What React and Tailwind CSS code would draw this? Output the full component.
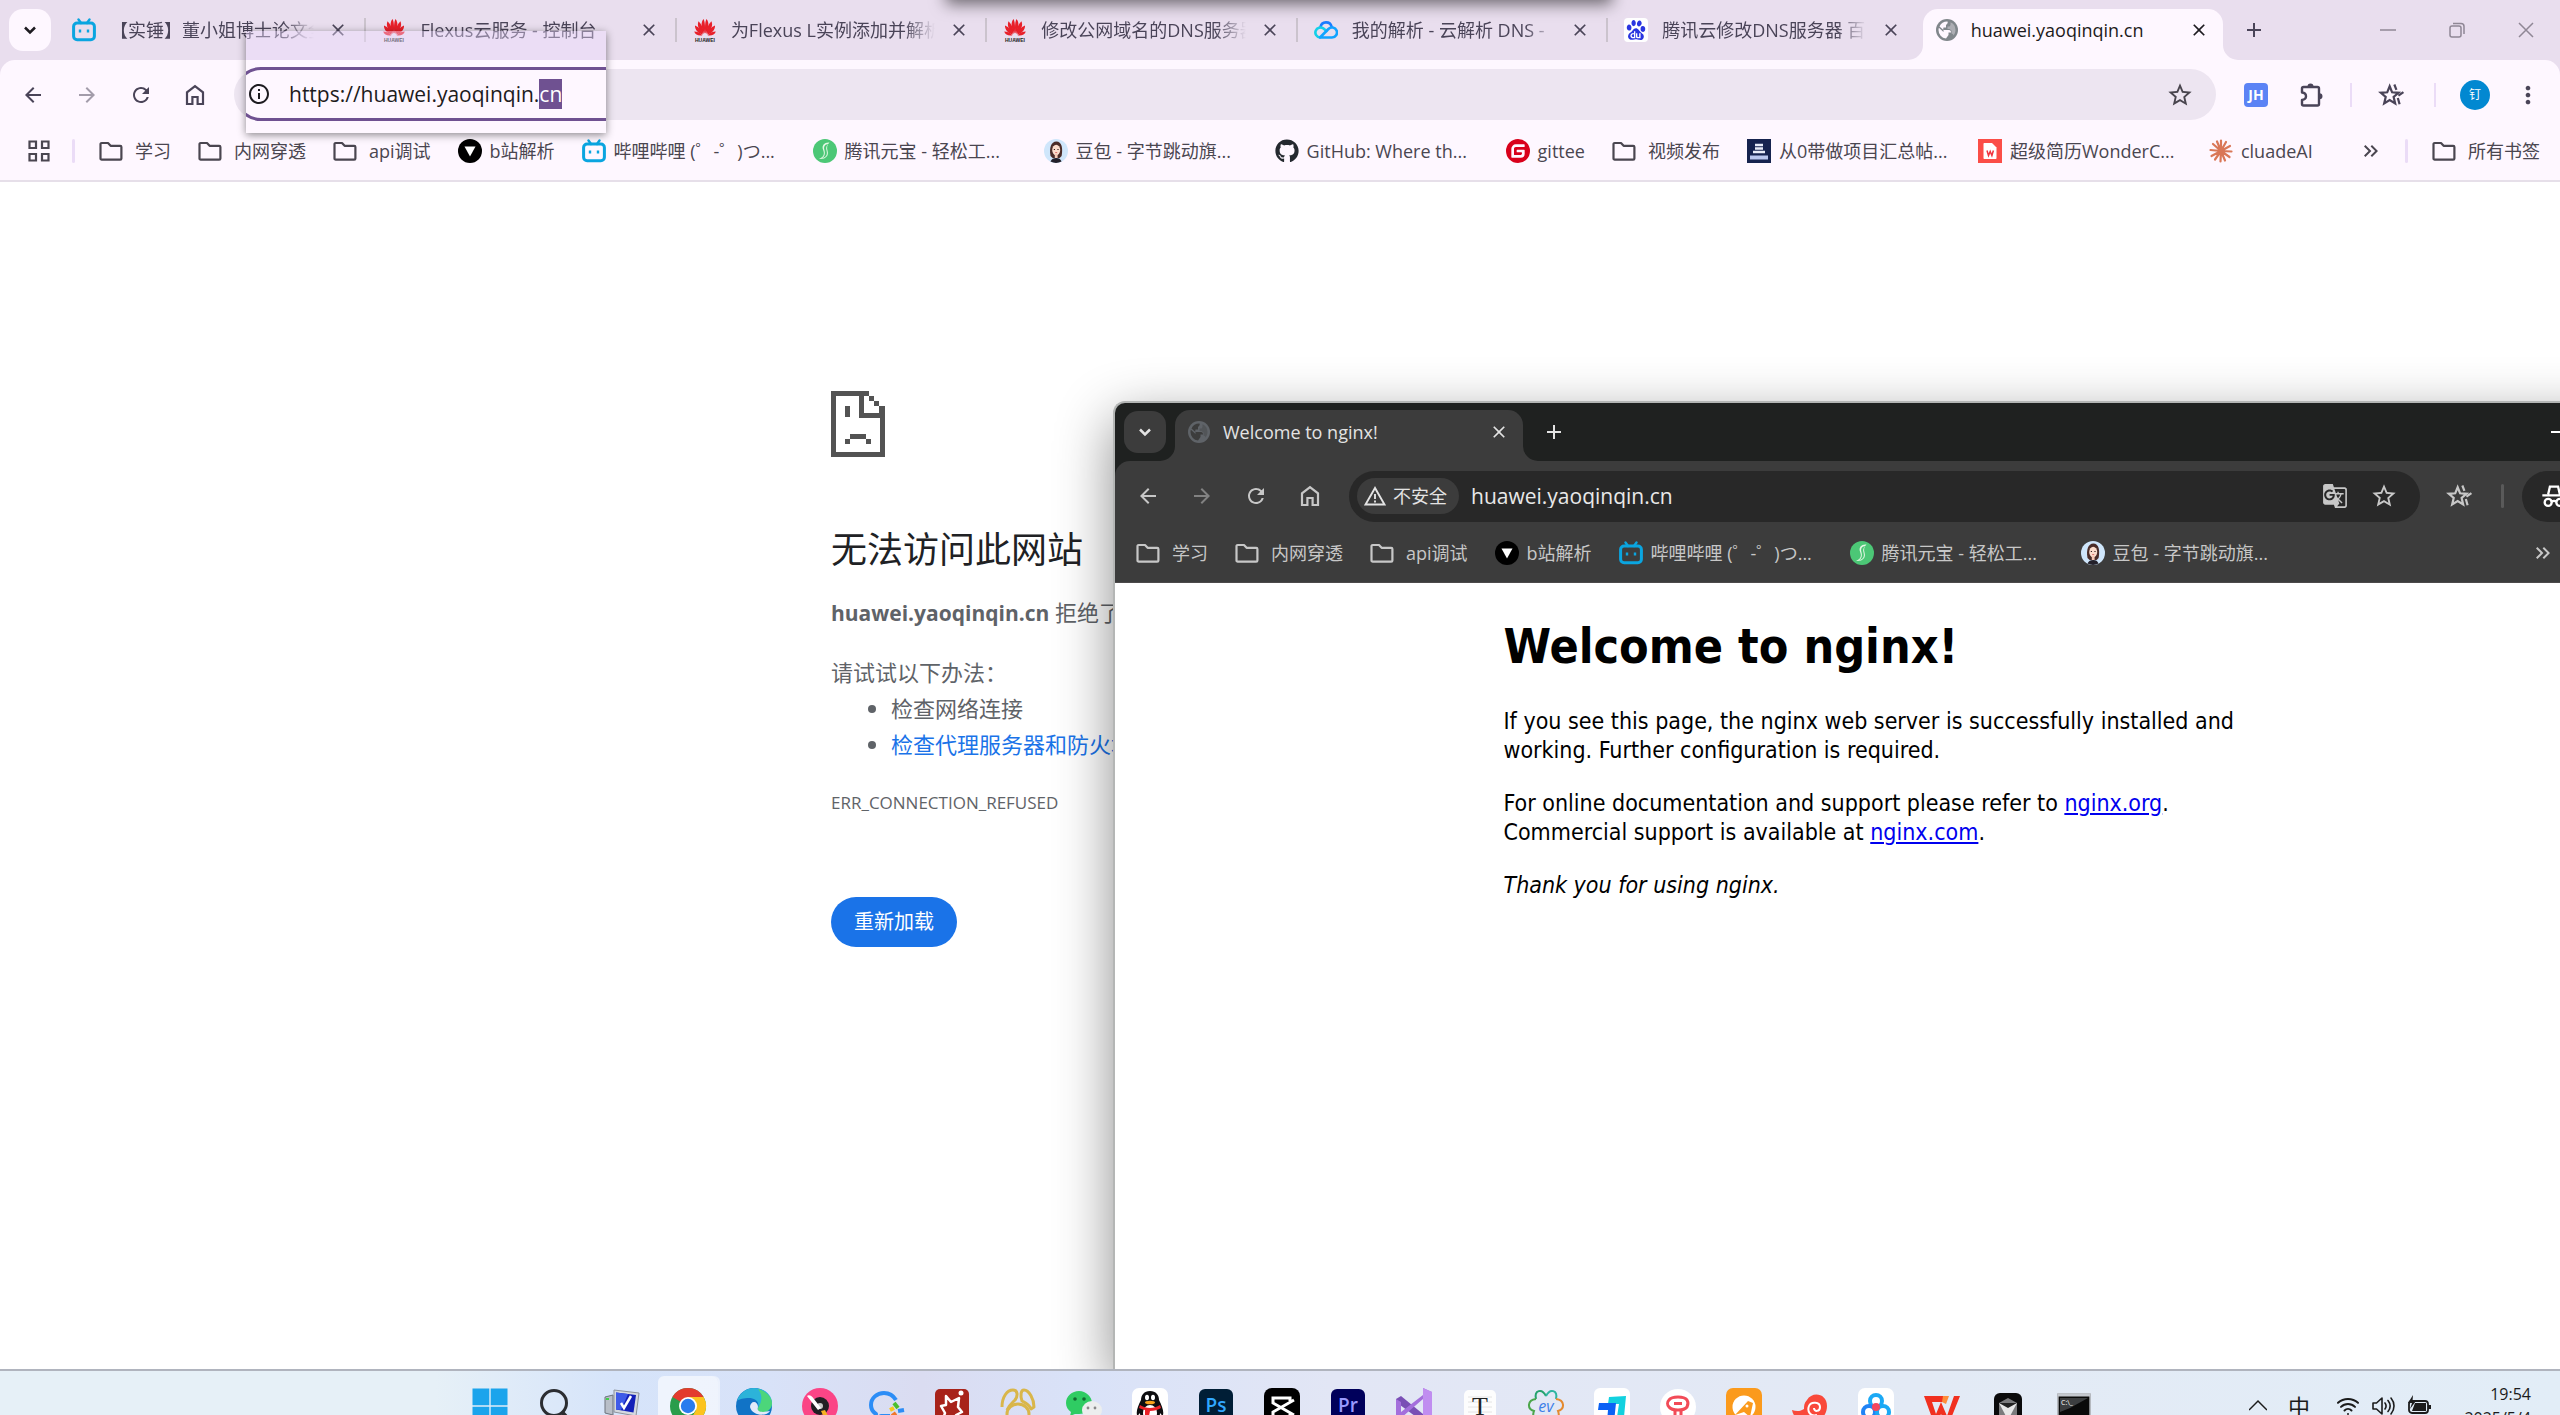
import React, { useEffect, useRef } from "react";
import clsx from "clsx";
import {
  MdArrowBack,
  MdArrowForward,
  MdRefresh,
  MdStarBorder,
  MdMoreVert,
  MdClose,
  MdAdd,
  MdGTranslate,
  MdKeyboardDoubleArrowRight,
  MdOutlineInfo,
} from "react-icons/md";
import { FaGithub } from "react-icons/fa";
import { SiBaidu, SiGitee } from "react-icons/si";
import { Wifi } from "lucide-react";

/* ---------- site icons ---------- */

const Bilibili = () => (
  <svg viewBox="0 0 24 24" className="size-6 shrink-0" fill="none" stroke="#0aa5e0">
    <path d="M6.500 1.500 9 5M17.500 1.500 15 5" strokeWidth="2.400" strokeLinecap="round" />
    <rect x="1.600" y="5" width="20.800" height="16.800" rx="3.500" strokeWidth="3" />
    <path d="M8 11.500v3M16 11.500v3" strokeWidth="2.400" />
  </svg>
);

const Huawei = () => (
  <svg viewBox="0 0 24 24" className="size-6 shrink-0">
    <g fill="#e8202a">
      <path d="M11.600 15.500C8 11 7.500 4 10.600 1c1.400 3 1.800 9 1 14.500z" />
      <path d="M12.400 15.500C16 11 16.500 4 13.400 1c-1.400 3-1.800 9-1 14.500z" />
      <path d="M10.800 15.800C6 13 3.600 7 5.600 3.200 8.600 6 10.600 11 10.800 15.800z" />
      <path d="M13.200 15.800c4.800-2.800 7.200-8.800 5.200-12.600-3 2.800-5 7.800-5.200 12.600z" />
      <path d="M10 16.400C5.400 15.800 1.600 11.400 2 7.400c4 1.600 7 5.200 8 9z" />
      <path d="M14 16.400c4.600-.6 8.400-5 8-9-4 1.600-7 5.200-8 9z" />
      <path d="M9.400 17.300c-3.600 1-7.400-.8-8.200-3.800 3.200 0 6.400 1.600 8.200 3.800z" />
      <path d="M14.600 17.300c3.600 1 7.400-.8 8.200-3.800-3.200 0-6.400 1.600-8.200 3.800z" />
    </g>
    <text x="12" y="23.600" textAnchor="middle" fontSize="5" fontWeight="700" fontFamily="Liberation Sans, sans-serif" fill="#222">
      HUAWEI
    </text>
  </svg>
);

const TencentCloud = () => (
  <svg viewBox="0 0 24 24" className="size-6 shrink-0" fill="none" strokeWidth="2.600" strokeLinecap="round">
    <path d="M6.500 9A5.700 5.700 0 0 1 17.600 8.600" stroke="#1a7dff" />
    <path d="M12.500 13 9.500 10.600A5 5 0 1 0 6 19.500" stroke="#14d0e8" />
    <path d="M6 19.500h12a5 5 0 1 0-3.600-8.500L6.500 19" stroke="#12a3ff" strokeLinejoin="round" />
  </svg>
);

const Baidu = () => (
  <span className="flex size-6 shrink-0 items-center justify-center rounded-sm bg-white">
    <SiBaidu className="size-5 text-[#2a35e0]" />
  </span>
);

const Globe = ({ disc, land }) => (
  <svg viewBox="0 0 24 24" className="size-6 shrink-0">
    <circle cx="12" cy="12" r="11" fill={disc} />
    <path d="M12.500 3.500c.8 1.500-.5 2.500-1.500 3.500v2.500H8.500l-.500 2.500h6c1.500 0 2 1 2 2.500h-2.500v2.500l-2.500 3.500A8.500 8.500 0 0 1 3.500 12c0-.8.2-1.600.400-2.200L8.500 14v-2l-4-3.500A8.500 8.500 0 0 1 12.500 3.500z" fill={land} />
    <path d="M15.500 4.300A8.500 8.500 0 0 1 20.500 12c0 2-.8 4-2 5.400-.4-1.200-1-1.700-2-1.900v-3l-2-1.500h-2V8.500h2l1-1.500z" fill={land} opacity="0.350" />
  </svg>
);

const Folder = () => (
  <svg viewBox="0 0 24 24" className="size-6 shrink-0" fill="none" stroke="currentColor" strokeWidth="2.200">
    <path d="M1.500 19.400V5.200c0-.7.500-1.200 1.200-1.200H9l2.600 2.800h9.600c.7 0 1.200.5 1.200 1.200v11.400c0 .7-.5 1.200-1.200 1.200H2.700c-.7 0-1.200-.5-1.200-1.200z" strokeLinejoin="round" />
  </svg>
);

const BParse = () => (
  <svg viewBox="0 0 24 24" className="size-6 shrink-0">
    <circle cx="12" cy="12" r="12" fill="#000" />
    <path d="M6.500 7.500h11L12 17.500z" fill="#fff" />
  </svg>
);

const Yuanbao = () => (
  <svg viewBox="0 0 24 24" className="size-6 shrink-0">
    <circle cx="12" cy="12" r="12" fill="#4cc776" />
    <path d="M16.500 3.500c-5-.5-8 3-6.500 7s1.500 7-4 9.500c7 .5 10-3.500 8.600-8-1-3.500-.6-6.500 1.900-8.500z" fill="#e4f8e4" />
    <path d="M15.500 5c-3.500.3-5 2.600-4.200 5.400 1 3.600.9 6.600-2.300 8.800 4-.7 5.600-3.700 4.600-7.200-.9-3-.4-5.400 1.900-7z" fill="#4cc776" />
  </svg>
);

const Doubao = () => (
  <svg viewBox="0 0 24 24" className="size-6 shrink-0">
    <circle cx="12" cy="12" r="12" fill="#cfe6fb" />
    <path d="M6.500 17C5 9 7 2.500 12.400 2.500S19 9 17.600 17l-2 2h-7z" fill="#4a2c28" />
    <ellipse cx="12.200" cy="11" rx="4" ry="5.200" fill="#fbdccb" />
    <path d="M10.800 15h2.800v4h-2.800z" fill="#f5c9b5" />
    <path d="M6.500 22.500c1-2.500 3-3.500 5.700-3.500s4.500 1 5.300 3.500a12 12 0 0 1-11 0z" fill="#23202a" />
    <path d="M9.800 10.500h1.200M13.400 10.500h1.200" stroke="#33211f" strokeWidth="1.200" />
    <path d="M11.200 13.600h2" stroke="#d8605c" strokeWidth=".9" />
  </svg>
);

const Project = () => (
  <svg viewBox="0 0 24 24" className="size-6 shrink-0">
    <path d="M0 0h24v24H0z" fill="#16234f" />
    <path d="M8 6h8M8 9.500h8M6 13h12" stroke="#e8ecf8" strokeWidth="2.400" />
    <path d="M3 18.500h18" stroke="#b9c6ee" strokeWidth="4" />
  </svg>
);

const Wonder = () => (
  <svg viewBox="0 0 24 24" className="size-6 shrink-0">
    <path d="M0 0h24v24H0z" fill="#fb4d47" />
    <path d="M6.500 4h7.500L18.500 8.500v10.500c0 .600-.400 1-1 1h-11c-.600 0-1-.400-1-1V5c0-.600.400-1 1-1z" fill="#fff" />
    <path d="m9 11.500 1.500 5 1.700-4 1.700 4 1.500-5" fill="none" stroke="#f1343f" strokeWidth="1.500" />
  </svg>
);

const Claude = () => (
  <svg viewBox="0 0 24 24" className="size-6 shrink-0" stroke="#d97757" strokeWidth="2.200" strokeLinecap="round">
    <path d="M12 12V1.500M12 12l5-9M12 12l9-5M12 12l10.500.500M12 12l8.500 6M12 12l4 9.500M12 12l-.500 10.500M12 12l-6 8.500M12 12l-9.500 5M12 12 1.500 11M12 12 4 5M12 12 8 2.500" />
  </svg>
);

/* ---------- browser icons ---------- */

const Apps = () => (
  <svg viewBox="0 0 24 24" className="size-6" fill="none" stroke="currentColor" strokeWidth="2.200">
    <path d="M2.500 2.500h6.500v6.500H2.500zM15 2.500h6.500v6.500H15zM2.500 15h6.500v6.500H2.500zM15 15h6.500v6.500H15z" />
  </svg>
);

const Home = () => (
  <svg viewBox="0 0 24 24" className="size-6" fill="none" stroke="currentColor" strokeWidth="2.200">
    <path d="M4 21V9.400L12 3.200l8 6.200V21h-5.400v-7H9.400v7z" />
  </svg>
);

const Puzzle = () => (
  <svg viewBox="0 0 28 28" className="size-7">
    <path
      d="M5.500 6h14c.8 0 1.500.7 1.500 1.500V23c0 .8-.7 1.500-1.500 1.500h-14c-.8 0-1.500-.7-1.500-1.500v-4c2.500-.3 4-1.800 4-3.700s-1.500-3.500-4-3.800v-4C4 6.700 4.700 6 5.500 6z"
      fill="none"
      stroke="currentColor"
      strokeWidth="2.400"
      strokeLinejoin="round"
    />
    <path d="M9.500 5.500a3 3 0 0 1 6 0zM21.500 12.300a3 3 0 0 1 0 6z" fill="currentColor" />
  </svg>
);

const StarTrail = () => (
  <svg viewBox="0 0 24 24" className="size-7" fill="none" stroke="currentColor" strokeWidth="1.900">
    <path d="m10 4.500 2.100 5.200 5.500.400-4.200 3.600 1.300 5.500L10 16.300l-4.700 2.900 1.300-5.500-4.200-3.600 5.500-.400z" />
    <path d="m14 3 1.800 4.600M17.500 12.500l4.300-3M17 14.500l1.500 5.500" />
  </svg>
);

const Chevron = () => (
  <svg viewBox="0 0 24 24" className="size-5" fill="none" stroke="currentColor" strokeWidth="3">
    <path d="m6 9 6 6 6-6" />
  </svg>
);

const Warning = () => (
  <svg viewBox="0 0 24 24" className="size-6" fill="none" stroke="currentColor" strokeWidth="1.900">
    <path d="M12 4 2.500 20.500h19zM12 10v5M12 16.500v2" />
  </svg>
);

const Incognito = () => (
  <svg viewBox="0 0 24 24" className="size-7" fill="none" stroke="currentColor" strokeWidth="2">
    <path d="M7 10.500 8.500 4h7L17 10.500M2 11.500h20" />
    <circle cx="7" cy="17.500" r="3" />
    <circle cx="17" cy="17.500" r="3" />
    <path d="M10 17c1-1 3-1 4 0" />
  </svg>
);

const SadPage = () => (
  <svg viewBox="0 0 27 33" className="h-[66px] w-[54px]" fill="#535353" shapeRendering="crispEdges">
    <path d="M0 0h19v2.500H2.500v28h22V13.500H14V2.500h2.500v8.500H27v22H0z" />
    <path d="M19 2.500h2.500V5H19zM21.500 5H24v2.500h-2.500zM24 7.500h3V11h-3zM7 7.500h2.500V13H7z" />
    <path d="M9.500 21.500h8V24h-8zM7 24h2.500v2.500H7zM17.500 24H20v2.500h-2.500z" />
  </svg>
);

/* Concave corner that joins the active tab with the toolbar */
const Flare = ({ side }) => (
  <svg
    viewBox="0 0 15 15"
    className={clsx("absolute bottom-0 size-[15px]", side === "left" ? "right-full" : "left-full")}
    fill="currentColor"
  >
    <path d={side === "left" ? "M15 0v15H0A15 15 0 0 0 15 0z" : "M0 0v15h15A15 15 0 0 1 0 0z"} />
  </svg>
);

/* ---------- shared data ---------- */

const tabs = [
  { title: "【实锤】董小姐博士论文全", icon: <Bilibili /> },
  { title: "Flexus云服务 - 控制台", icon: <Huawei /> },
  { title: "为Flexus L实例添加并解析", icon: <Huawei /> },
  { title: "修改公网域名的DNS服务器", icon: <Huawei /> },
  { title: "我的解析 - 云解析 DNS -", icon: <TencentCloud /> },
  { title: "腾讯云修改DNS服务器 百", icon: <Baidu /> },
];

const bookmarks = [
  { label: "学习", icon: <Folder />, folder: true },
  { label: "内网穿透", icon: <Folder />, folder: true },
  { label: "api调试", icon: <Folder />, folder: true },
  { label: "b站解析", icon: <BParse /> },
  { label: "哔哩哔哩 (゜-゜)つ...", icon: <Bilibili />, long: true },
  { label: "腾讯元宝 - 轻松工...", icon: <Yuanbao />, long: true },
  { label: "豆包 - 字节跳动旗...", icon: <Doubao />, long: true },
  { label: "GitHub: Where th...", icon: <FaGithub className="size-6 shrink-0 text-[#24292f]" />, long: true },
  { label: "gittee", icon: <SiGitee className="size-6 shrink-0 text-[#d9001b]" /> },
  { label: "视频发布", icon: <Folder />, folder: true },
  { label: "从0带做项目汇总帖...", icon: <Project />, long: true },
  { label: "超级简历WonderC...", icon: <Wonder />, long: true },
  { label: "cluadeAI", icon: <Claude /> },
];

const Bookmark = ({ item }) => (
  <a
    href="#"
    className={clsx(
      "flex shrink-0 items-center whitespace-nowrap",
      item.folder ? "gap-3" : "gap-2",
      item.long && "w-[204px]"
    )}
  >
    {item.icon}
    {item.label}
  </a>
);

const NavButtons = () => (
  <>
    <button aria-label="Back" className="flex w-[54px] justify-center">
      <MdArrowBack className="size-6" />
    </button>
    <button aria-label="Forward" className="flex w-[54px] justify-center opacity-50">
      <MdArrowForward className="size-6" />
    </button>
    <button aria-label="Reload" className="flex w-[54px] justify-center">
      <MdRefresh className="size-6" />
    </button>
    <button aria-label="Home" className="flex w-[54px] justify-center">
      <Home />
    </button>
  </>
);

/* ---------- main browser ---------- */

const TabStrip = () => (
  <div className="flex h-[60px] items-center bg-[#e9deee] pl-[9px] text-[#4a4458]">
    <button aria-label="Search tabs" className="flex size-[42px] shrink-0 items-center justify-center rounded-[14px] bg-[#fef7ff] text-[#1d1b20]">
      <Chevron />
    </button>
    <div className="flex h-full max-w-[2172px] flex-1 pl-[5px]">
      {tabs.map((tab, i) => (
        <div key={tab.title} className="flex h-full min-w-0 flex-[310] items-center">
          <div className="flex min-w-0 flex-1 items-center pl-4">
            {tab.icon}
            <span className="ml-[14px] min-w-0 flex-1 overflow-hidden whitespace-nowrap [mask-image:linear-gradient(to_right,black_85%,transparent)]">
              {tab.title}
            </span>
            <button aria-label="Close tab" className="mr-[14px] ml-3 shrink-0">
              <MdClose className="size-6 p-0.5" />
            </button>
          </div>
          <div className={clsx("h-6 w-0.5", i < tabs.length - 1 && "bg-[#cbc3cd]")} />
        </div>
      ))}
      <div className="relative mt-[9px] ml-1 flex min-w-0 flex-[300] items-center rounded-t-[15px] bg-[#fef7ff] pb-[9px] text-[#fef7ff]">
        <Flare side="left" />
        <div className="flex min-w-0 flex-1 items-center pl-3 text-[#1d1b20]">
          <Globe disc="#80868b" land="#fef7ff" />
          <span className="ml-3 flex-1 whitespace-nowrap">huawei.yaoqinqin.cn</span>
          <button aria-label="Close tab" className="mr-3">
            <MdClose className="size-6 p-0.5" />
          </button>
        </div>
        <Flare side="right" />
      </div>
    </div>
    <button aria-label="New tab" className="ml-4 flex size-[30px] items-center justify-center">
      <MdAdd className="size-6" />
    </button>
    <div className="ml-auto flex text-[#8f8795]">
      <button aria-label="Minimize" className="flex h-[42px] w-[69px] items-center justify-center">
        <svg viewBox="0 0 16 16" className="size-4" stroke="currentColor" strokeWidth="1.500">
          <path d="M0 8h16" />
        </svg>
      </button>
      <button aria-label="Restore" className="flex h-[42px] w-[69px] items-center justify-center">
        <svg viewBox="0 0 16 16" className="size-4" fill="none" stroke="currentColor" strokeWidth="1.500">
          <rect x="1" y="4" width="11" height="11" rx="2" />
          <path d="M4 1.500h8c1.700 0 3 1.300 3 3V12" />
        </svg>
      </button>
      <button aria-label="Close" className="flex h-[42px] w-[69px] items-center justify-center">
        <svg viewBox="0 0 16 16" className="size-4" stroke="currentColor" strokeWidth="1.500">
          <path d="m1 1 14 14M15 1 1 15" />
        </svg>
      </button>
    </div>
  </div>
);

const Toolbar = () => (
  <div className="flex h-[69px] items-center text-[#4a4458]">
    <div className="flex pl-1.5">
      <NavButtons />
    </div>
    <div className="ml-3 flex h-[51px] flex-1 items-center justify-end rounded-full bg-[#ede5f1] pr-[22px] text-[#49454e]">
      <button aria-label="Bookmark this page">
        <MdStarBorder className="size-7" />
      </button>
    </div>
    <button aria-label="JH" className="ml-7 size-6 rounded-sm bg-[#5b83f5] text-center text-[14px] leading-6 font-bold text-white">
      JH
    </button>
    <button aria-label="Extensions" className="ml-[30px]">
      <Puzzle />
    </button>
    <div className="ml-6 h-6 w-0.5 bg-[#ebdcf7]" />
    <button aria-label="Bookmarks" className="ml-[26px]">
      <StarTrail />
    </button>
    <div className="ml-7 h-6 w-0.5 bg-[#ebdcf7]" />
    <button aria-label="Profile" className="ml-6 size-[30px] rounded-full bg-[#0288d1] text-center text-[12px] leading-[30px] text-white">
      钉
    </button>
    <button aria-label="Menu" className="mr-[18px] ml-6">
      <MdMoreVert className="size-7" />
    </button>
  </div>
);

const BookmarkBar = () => (
  <div className="flex h-[51px] items-start pl-[27px] text-[#4a4650]">
    <div className="flex h-11 flex-1 items-center">
      <button aria-label="Apps">
        <Apps />
      </button>
      <div className="mr-6 ml-[21px] h-6 w-[3px] rounded bg-[#ebdcf7]" />
      <nav className="flex gap-[27px]">
        {bookmarks.map((item) => (
          <Bookmark key={item.label} item={item} />
        ))}
      </nav>
      <button aria-label="More bookmarks" className="ml-auto">
        <MdKeyboardDoubleArrowRight className="size-6" />
      </button>
      <div className="mr-6 ml-[22px] h-6 w-[3px] rounded bg-[#ebdcf7]" />
      <button className="mr-5 flex items-center gap-3">
        <Folder />
        所有书签
      </button>
    </div>
  </div>
);

/* Copy of the address bar lifted above the browser */
const AddressPopup = () => {
  const inputRef = useRef(null);

  useEffect(() => {
    const input = inputRef.current;
    input.focus({ preventScroll: true });
    input.setSelectionRange(input.value.length - 2, input.value.length);
  }, []);

  return (
    <div className="absolute top-[31px] left-[246px] h-[102px] w-[360px] overflow-hidden shadow-[0_2px_8px_rgba(0,0,0,0.45)]">
      <div className="h-[29px] bg-[#eddbff]/40" />
      <div className="h-[73px] bg-[#fef7ff] pt-[7px]">
        <div className="-mr-10 -ml-3 flex h-[54px] items-center rounded-full border-3 border-[#6f5191] pl-[10px] text-[#1d1b20]">
          <MdOutlineInfo className="size-6 shrink-0" />
          <input
            ref={inputRef}
            aria-label="Address"
            defaultValue="https://huawei.yaoqinqin.cn"
            className="ml-[18px] w-[300px] bg-transparent text-[21px] leading-[30px] outline-none selection:bg-[#6f5191] selection:text-white"
          />
        </div>
      </div>
    </div>
  );
};

const ErrorPage = () => (
  <main className="w-full max-w-[900px] self-center pt-[209px] pl-px text-[22px] leading-9 text-[#5f6368]">
    <SadPage />
    <h1 className="mt-[66px] text-[36px] leading-[54px] text-[#202124]">无法访问此网站</h1>
    <p className="mt-[17px]">
      <strong className="text-[21px] font-bold">huawei.yaoqinqin.cn</strong> 拒绝了我们的连接请求。
    </p>
    <p className="mt-[23px]">请试试以下办法：</p>
    <ul className="list-disc pl-[60px]">
      <li>检查网络连接</li>
      <li>
        <a href="#" className="text-[#1a73e8]">
          检查代理服务器和防火墙
        </a>
      </li>
    </ul>
    <p className="mt-[23px] text-[17px]">ERR_CONNECTION_REFUSED</p>
    <button className="mt-[76px] h-[50px] rounded-full bg-[#1a73e8] px-[23px] text-[20px] leading-[50px] text-white">重新加载</button>
  </main>
);

/* ---------- incognito window ---------- */

const IncognitoWindow = () => (
  <section className="absolute top-[401px] bottom-0 left-[1113px] flex w-[1619px] flex-col overflow-hidden rounded-tl-[12px] border-t-2 border-l-2 border-[#b4b6b5] bg-[#1f2120] text-[#c7c7c7] shadow-[0_18px_56px_rgba(0,0,0,0.45)]">
    <div className="flex h-[58px] shrink-0 items-center pl-[9px] text-[#e3e3e3]">
      <button aria-label="Search tabs" className="flex size-[42px] items-center justify-center rounded-[14px] bg-[#3c3c3c]">
        <Chevron />
      </button>
      <div className="relative ml-[9px] flex h-[51px] w-[348px] items-center self-end rounded-t-[15px] bg-[#3c3c3c] pb-[7px] text-[#3c3c3c]">
        <Flare side="left" />
        <div className="flex flex-1 items-center pl-3 text-[#e3e3e3]">
          <Globe disc="#5f6368" land="#3c3c3c" />
          <span className="ml-3 flex-1">Welcome to nginx!</span>
          <button aria-label="Close tab" className="mr-3">
            <MdClose className="size-6 p-0.5" />
          </button>
        </div>
        <Flare side="right" />
      </div>
      <button aria-label="New tab" className="ml-4 flex size-[30px] items-center justify-center">
        <MdAdd className="size-6" />
      </button>
      <button aria-label="Minimize" className="mr-[165px] ml-auto h-0.5 w-4 bg-white" />
    </div>

    <div className="flex h-[70px] shrink-0 items-center rounded-tl-[15px] bg-[#3c3c3c]">
      <div className="flex pl-1.5">
        <NavButtons />
      </div>
      <div className="ml-3 flex h-[51px] w-[1071px] items-center rounded-full bg-[#282828] pr-[22px] pl-2 text-[#e3e3e3]">
        <button className="flex h-9 items-center gap-1.5 rounded-full bg-[#3c3c3c] pr-3 pl-1.5">
          <Warning />
          不安全
        </button>
        <input
          aria-label="Address"
          defaultValue="huawei.yaoqinqin.cn"
          className="ml-3 min-w-0 flex-1 bg-transparent text-[21px] text-[#e8e8e8] outline-none"
        />
        <button aria-label="Translate" className="text-[#c7c7c7]">
          <MdGTranslate className="size-[26px]" />
        </button>
        <button aria-label="Bookmark this page" className="ml-[22px] text-[#c7c7c7]">
          <MdStarBorder className="size-7" />
        </button>
      </div>
      <button aria-label="Bookmarks" className="ml-[26px]">
        <StarTrail />
      </button>
      <div className="ml-[27px] h-6 w-[3px] rounded bg-[#5a5a5a]" />
      <div className="ml-[18px] flex h-[51px] w-[150px] items-center rounded-full bg-[#282828] pl-[18px] text-white">
        <Incognito />
      </div>
    </div>

    <div className="flex h-[52px] shrink-0 items-start border-b border-[#4c4a4b] bg-[#3c3c3c] pl-[21px]">
      <div className="flex h-[43px] flex-1 items-center">
        <nav className="flex gap-[27px]">
          {bookmarks.slice(0, 7).map((item) => (
            <Bookmark key={item.label} item={item} />
          ))}
        </nav>
        <button aria-label="More bookmarks" className="mr-[177px] ml-auto">
          <MdKeyboardDoubleArrowRight className="size-6" />
        </button>
      </div>
    </div>

    <div className="flex-1 bg-white">
      <article className="mx-auto w-[840px] pt-[34px] font-['DejaVu_Sans_Condensed','DejaVu_Sans',sans-serif] text-[23px] leading-[29px] text-black">
        <h1 className="mb-8 text-[48px] leading-[58px] font-bold">Welcome to nginx!</h1>
        <p>
          If you see this page, the nginx web server is successfully installed and
          <br />
          working. Further configuration is required.
        </p>
        <p className="mt-6">
          For online documentation and support please refer to{" "}
          <a href="#" className="text-[#0000ee] underline">nginx.org</a>.
          <br />
          Commercial support is available at{" "}
          <a href="#" className="text-[#0000ee] underline">nginx.com</a>.
        </p>
        <p className="mt-6">
          <em>Thank you for using nginx.</em>
        </p>
      </article>
    </div>
  </section>
);

/* ---------- taskbar ---------- */

const apps = [
  {
    name: "Start",
    art: <path d="M.500.500h16.800v16.800H.500zM18.700.500h16.800v16.800H18.700zM.500 18.700h16.800v16.800H.500zM18.700 18.700h16.800v16.800H18.700z" fill="#1ba4ec" />,
  },
  {
    name: "Search",
    art: (
      <g fill="none" stroke="#2b2d31" strokeWidth="3">
        <circle cx="16" cy="15" r="12.500" />
        <path d="m24 24 8 9" strokeWidth="4" />
      </g>
    ),
  },
  {
    name: "Remote",
    art: (
      <g>
        <path d="m1 9 8-2v20l-8-2z" fill="#b8bec8" stroke="#6c737d" />
        <path d="M2 11h3" stroke="#3fd04a" strokeWidth="2" />
        <path d="m10 2 25 3-3 23-22-4z" fill="#d5d9df" stroke="#8d939c" />
        <path d="m12 4.500 20 2.500-2.500 17.500L12 21.500z" fill="#1420b8" />
        <path d="m12 4.500 12 1.500-7 16L12 21.500z" fill="#3f5be8" />
        <path d="m17 15 3 5 7-12" fill="none" stroke="#fff" strokeWidth="2.500" />
        <ellipse cx="22" cy="30" rx="8" ry="2.500" fill="#c4c8ce" />
      </g>
    ),
  },
  {
    name: "Chrome",
    active: true,
    art: (
      <g>
        <circle cx="18" cy="18" r="18" fill="#2a9d4b" />
        <path d="M18 18 2.400 9A18 18 0 0 1 33.600 9z" fill="#e33b2e" />
        <path d="M18 9h15.600A18 18 0 0 1 18 36l7.800-13.500z" fill="#fcc31e" />
        <circle cx="18" cy="18" r="9" fill="#fff" />
        <circle cx="18" cy="18" r="7.200" fill="#2a7cee" />
      </g>
    ),
  },
  {
    name: "Edge",
    art: (
      <g>
        <circle cx="18" cy="18" r="18" fill="#1173c6" />
        <path d="M1 13C4 4 11 0 18 0c10 0 18 7 18 15 0 6-5 10-11 9-4 0-4-2-3-4 2-7-4-10-9-10C8 10 3 11 1 13z" fill="#2cb3d9" />
        <path d="M22 1c8 2 14 8 14 14 0 6-5 10-11 9-4 0-4-2-3-4 4-6 5-13 0-19z" fill="#4cd67a" />
        <path d="M14 19c0-3 2-5 4-5s4 2 4 5c-1 3 0 5 5 5l7-1c-3 6-18 5-20-4z" fill="#e2eafa" />
      </g>
    ),
  },
  {
    name: "Recorder",
    art: (
      <g>
        <circle cx="18" cy="18" r="18" fill="#fb4586" />
        <circle cx="18" cy="18" r="9" fill="#221f24" />
        <circle cx="18" cy="18" r="3" fill="#c8c8c8" />
        <path d="M5 8c2-2 5 0 7 3l7 9-3 2z" fill="#fff" />
        <path d="m19 23 4-1 6 12-4 2z" fill="#f7b322" />
      </g>
    ),
  },
  {
    name: "WeCom",
    art: (
      <g fill="none" strokeWidth="4">
        <path d="M28 12C25 7 21 5 16 5 9 5 3 10 3 17c0 4 2 7 5 9l-1 5 6-3h9" stroke="#2c8df6" strokeLinejoin="round" />
        <path d="m26 15 4 5" stroke="#4bbf2f" />
        <path d="m22 22 4-2" stroke="#f9c81e" />
        <path d="m30 23 6-1" stroke="#2c8df6" />
        <path d="m24 28 4-3" stroke="#f2762a" />
      </g>
    ),
  },
  {
    name: "Jester",
    art: (
      <g>
        <rect x="1" y="1" width="34" height="36" rx="5" fill="#a8231a" />
        <path d="m12 8 5 6 8-4-1 9 4 5-6 3 1 8-7-5-8 4 3-9-4-7 5-1z" fill="none" stroke="#fff" strokeWidth="2.500" strokeLinejoin="round" />
        <circle cx="27" cy="5" r="2.500" fill="#fff" />
      </g>
    ),
  },
  {
    name: "Navicat",
    art: (
      <g fill="none" stroke="#d9b64a" strokeWidth="3" strokeLinejoin="round">
        <path d="M2 19C2 9 7 2 13 2c5 0 5 6 2 10-3 3-6 5-8 10" />
        <path d="M22 13c-2-6-1-11 2-11 5 0 10 9 10 17l-3 2c-2-5-5-6-9-8z" />
        <ellipse cx="18" cy="26" rx="11" ry="10" />
      </g>
    ),
  },
  {
    name: "WeChat",
    art: (
      <g>
        <path d="M13 3C6 3 0 8 0 15c0 4 2 7 5 9l-1 4 5-2h4c7 0 13-5 13-11S20 3 13 3z" fill="#2fcc63" />
        <circle cx="9" cy="11" r="1.800" fill="#116a30" />
        <circle cx="18" cy="11" r="1.800" fill="#116a30" />
        <ellipse cx="26" cy="22" rx="10" ry="9" fill="#eceeee" />
        <circle cx="22" cy="20" r="1.400" fill="#888" />
        <circle cx="29" cy="20" r="1.400" fill="#888" />
      </g>
    ),
  },
  {
    name: "QQ",
    art: (
      <g>
        <rect width="36" height="38" rx="7" fill="#fff" />
        <path d="M18 3c-6 0-9 4-9 9-3 6-5 11-4 15 1 1 2-1 3-2 0 5 4 8 10 8s10-3 10-8c1 1 2 3 3 2 1-4-1-9-4-15 0-5-3-9-9-9z" fill="#0e0e10" />
        <ellipse cx="18" cy="25" rx="7" ry="8" fill="#fff" />
        <ellipse cx="15" cy="9.500" rx="2" ry="2.800" fill="#fff" />
        <ellipse cx="21" cy="9.500" rx="2" ry="2.800" fill="#fff" />
        <ellipse cx="18" cy="14.500" rx="5" ry="1.800" fill="#f9a11b" />
        <path d="M8 17c6 4 14 4 20 0l1 3c-3 2-7 3-11 3l-1 5h-4v-6c-2-.5-4-1-6-2z" fill="#eb2027" />
      </g>
    ),
  },
  {
    name: "Photoshop",
    art: (
      <g>
        <rect x="1" y="1" width="34" height="36" rx="6" fill="#001e36" />
        <text x="18" y="24" textAnchor="middle" fontSize="19" fontWeight="600" fill="#31a8ff">Ps</text>
      </g>
    ),
  },
  {
    name: "CapCut",
    art: (
      <g>
        <rect width="36" height="38" rx="8" fill="#000" />
        <path d="M30 12 9 24v5h17v-3M30 27 9 15v-5h17v3" fill="none" stroke="#fff" strokeWidth="3" />
      </g>
    ),
  },
  {
    name: "Premiere",
    art: (
      <g>
        <rect x="1" y="1" width="34" height="36" rx="6" fill="#00005b" />
        <text x="18" y="24" textAnchor="middle" fontSize="19" fontWeight="600" fill="#9999ff">Pr</text>
      </g>
    ),
  },
  {
    name: "Visual Studio",
    art: (
      <g>
        <path d="m0 11 5-3 22 18v8L0 14z" fill="#7a4fb5" />
        <path d="M0 27V11l5 3v10l22-17 0-7 9 4v30l-9 4v-8L27 11 5 30z" fill="#a46fdc" />
        <path d="m27 0 9 4v30l-9 4z" fill="#c08df0" />
      </g>
    ),
  },
  {
    name: "Typora",
    art: (
      <g>
        <rect x="2" y="2" width="32" height="36" rx="5" fill="#fdfdfd" />
        <path d="M6 9h24M6 14h24M6 19h24M6 24h24" stroke="#e4e4e4" />
        <text x="18" y="27" textAnchor="middle" fontSize="26" fontFamily="Liberation Serif, serif" fill="#222">T</text>
      </g>
    ),
  },
  {
    name: "EV",
    art: (
      <g fill="none" strokeWidth="2">
        <path d="M18 8C14 0 6 2 8 11" stroke="#26a36e" />
        <path d="M18 8c4-8 12-6 10 3" stroke="#2fb5a0" />
        <path d="M8 11c-9 1-9 10-2 12-3 8 4 12 11 9" stroke="#4ca64b" />
        <path d="M28 11c9 1 9 10 2 12 3 8-4 12-11 9" stroke="#e48a2f" />
        <text x="18" y="24" textAnchor="middle" fontSize="16" fontStyle="italic" fill="#3d7fe8" stroke="none">ev</text>
      </g>
    ),
  },
  {
    name: "ToDesk",
    art: (
      <g>
        <rect width="36" height="38" rx="6" fill="#fff" />
        <path d="m15 9 17-1-2 21h-7l2-13H14z" fill="#12d1df" />
        <path d="M5 15h17l-2 19h-7l1-12H4z" fill="#0a62f5" />
      </g>
    ),
  },
  {
    name: "Knot",
    art: (
      <g>
        <circle cx="18" cy="19" r="18" fill="#fff" />
        <g fill="none" stroke="#f24b57" strokeWidth="3">
          <path d="M9 19a5 5 0 0 1 0-7c3-4 15-4 18 0 2 3 1 5 0 7-3 4-15 4-18 0z" />
          <path d="M14 15.500h8M15 22v6a3 3 0 0 0 6 0v-6" />
        </g>
      </g>
    ),
  },
  {
    name: "Proxy",
    art: (
      <g>
        <rect width="36" height="38" rx="7" fill="#fb9a1c" />
        <circle cx="18" cy="19" r="11.500" fill="#fff" />
        <path d="M9 27 22 13l5 2-3 14-6-5z" fill="#fb9a1c" />
        <circle cx="21" cy="18" r="1.500" fill="#fff" />
      </g>
    ),
  },
  {
    name: "Spiral",
    art: (
      <g>
        <path d="M15 12C20 3 35 5 35 18c0 10-8 18-20 17C6 34 1 28 0 22c5 2 9 1 12-1 0-3 0-6 3-9z" fill="#f9493a" />
        <path d="M25 27c-7 2-10-4-8-9s11-4 11 1-6 5-6 1" fill="none" stroke="#fff" strokeWidth="2" />
      </g>
    ),
  },
  {
    name: "Netdisk",
    art: (
      <g>
        <rect width="36" height="38" rx="7" fill="#fff" />
        <g fill="none" strokeWidth="4">
          <circle cx="18" cy="13" r="6" stroke="#1ba9f5" />
          <circle cx="11" cy="24" r="6" stroke="#2083f5" />
          <circle cx="25" cy="24" r="6" stroke="#1ba9f5" />
        </g>
        <circle cx="18" cy="19" r="4" fill="#f4475c" />
      </g>
    ),
  },
  {
    name: "WPS",
    art: (
      <g>
        <path d="M0 8h24l-3 6H8l4 12 5-12 6 14 7-20h6L24 38l-7-12-6 12z" fill="#f1301f" />
        <path d="M19 8h6l-3 8-4-2z" fill="#ff8d3a" />
      </g>
    ),
  },
  {
    name: "Cursor",
    art: (
      <g>
        <rect x="4" y="5" width="28" height="32" rx="6" fill="#0b0b0c" />
        <path d="m18 10 9 5v12l-9 5-9-5V15z" fill="#7b7b7d" />
        <path d="M9 15h18l-9 17z" fill="#e8e8e8" />
        <path d="M9 15h18l-9 5z" fill="#222" />
      </g>
    ),
  },
  {
    name: "Terminal",
    art: (
      <g>
        <rect x="2" y="6" width="32" height="30" fill="#0a0a0a" stroke="#a6a9ad" strokeWidth="1.500" />
        <path d="M2 7h32" stroke="#c4c8ce" strokeWidth="3" />
        <path d="M4 10h28L14 20 4 24z" fill="#3c3e40" />
        <text x="5" y="17" fontSize="7" fill="#fff">C:\_</text>
      </g>
    ),
  },
];

const Taskbar = () => (
  <footer className="relative h-[46px] shrink-0 overflow-hidden border-t-2 border-[#b0b4be] bg-[linear-gradient(90deg,#e6f0f7_0%,#e6f0f7_17%,#d6e4fa_24%,#d8e2f8_30%,#dadcf1_36%,#d9e2f8_42%,#e2e6f5_52%,#e3eaf5_75%,#e2edf7_100%)]">
    <div className="flex h-[70px] items-center justify-center pl-1">
      {apps.map((app) => (
        <button
          key={app.name}
          aria-label={app.name}
          className={clsx(
            "mx-[3px] flex h-[60px] w-[60px] items-center justify-center rounded-md",
            app.active && "bg-white/60 shadow-[2px_0_0_rgba(255,255,255,0.5)]"
          )}
        >
          <svg viewBox="0 0 36 36" className="size-9 overflow-visible font-['Open_Sans',sans-serif]">
            {app.art}
          </svg>
        </button>
      ))}
    </div>
    <div className="absolute top-0 right-[29px] flex h-[70px] items-center text-[#1b1b1b]">
      <svg viewBox="0 0 18 18" className="size-[18px]" fill="none" stroke="currentColor" strokeWidth="1.500">
        <path d="m0 13 9-9 9 9" />
      </svg>
      <span className="ml-[21px] text-[22px]">中</span>
      <Wifi className="ml-[26px] size-6" strokeWidth={2} />
      <svg viewBox="0 0 24 24" className="ml-3 size-6" fill="none" stroke="currentColor" strokeWidth="1.600">
        <path d="M1 9h3.500L10 4v16l-5.500-5H1z" strokeLinejoin="round" />
        <path d="M13 9c1.300 1.800 1.300 4.200 0 6M16 6.500c2.600 3.300 2.600 7.700 0 11M19 4c4 4.800 4 11.200 0 16" strokeLinecap="round" />
      </svg>
      <svg viewBox="0 0 24 24" className="ml-3 size-6">
        <rect x="1" y="7" width="19" height="12" rx="3" fill="none" stroke="currentColor" strokeWidth="1.800" />
        <path d="M20 11h3v4h-3zM7 9h11v8H4z" fill="currentColor" />
        <path d="M5 1 0 9h4l-2 6 6-8H4.500z" fill="currentColor" />
      </svg>
      <div className="w-[99px] text-right text-[16px] leading-6">
        <div>19:54</div>
        <div>2025/5/4</div>
      </div>
    </div>
  </footer>
);

const App = () => (
  <div className="flex h-screen flex-col overflow-hidden bg-white font-['Open_Sans','Noto_Sans_CJK_SC',sans-serif] text-[18px] leading-6">
    <div className="relative flex min-h-0 flex-1 flex-col overflow-hidden">
      <header className="border-b-2 border-[#e6dfe9] bg-[#e9deee]">
        <TabStrip />
        <div className="rounded-t-[15px] bg-[#fef7ff]">
          <Toolbar />
          <BookmarkBar />
        </div>
      </header>
      <ErrorPage />
      {/* shadow of a window parked above the screen */}
      <div className="absolute bottom-full left-[948px] h-5 w-[662px] shadow-[0_2px_16px_2px_rgba(0,0,0,0.55)]" />
      <AddressPopup />
      <IncognitoWindow />
    </div>
    <Taskbar />
  </div>
);

export default App;
